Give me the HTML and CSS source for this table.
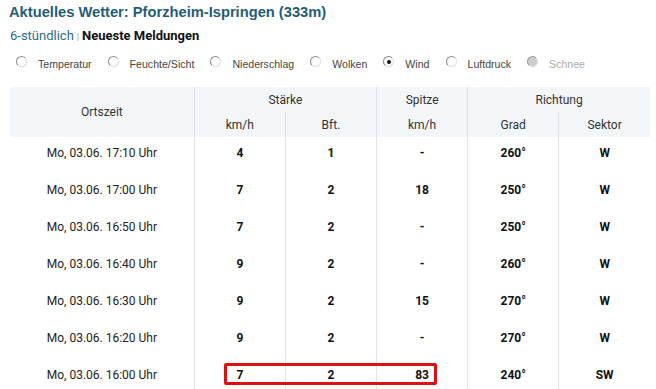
FILE: index.html
```
<!DOCTYPE html>
<html>
<head>
<meta charset="utf-8">
<link rel="stylesheet" href="styles.css">
</head>
<body>
<h1 class="title">Aktuelles Wetter: Pforzheim-Ispringen (333m)</h1>
<div class="tabs"><a class="tab-link">6-stündlich</a><span class="sep">|</span><b class="tab-active">Neueste Meldungen</b></div>
<div class="radios">
  <label class="opt"><span class="radio"></span><span class="lbl">Temperatur</span></label>
  <label class="opt"><span class="radio"></span><span class="lbl">Feuchte/Sicht</span></label>
  <label class="opt"><span class="radio"></span><span class="lbl">Niederschlag</span></label>
  <label class="opt"><span class="radio"></span><span class="lbl">Wolken</span></label>
  <label class="opt"><span class="radio checked"></span><span class="lbl">Wind</span></label>
  <label class="opt"><span class="radio"></span><span class="lbl">Luftdruck</span></label>
  <label class="opt disabled"><span class="radio"></span><span class="lbl">Schnee</span></label>
</div>
<div class="table-wrap">
<table class="wx">
  <colgroup>
    <col class="c-time"><col class="c-n"><col class="c-n"><col class="c-n"><col class="c-n"><col class="c-n">
  </colgroup>
  <thead>
    <tr class="h1">
      <th rowspan="2" class="first">Ortszeit</th>
      <th colspan="2" class="grp">Stärke</th>
      <th class="grp">Spitze</th>
      <th colspan="2" class="grp last">Richtung</th>
    </tr>
    <tr class="h2">
      <th class="grp">km/h</th>
      <th class="sub">Bft.</th>
      <th class="grp">km/h</th>
      <th class="grp">Grad</th>
      <th class="sub last">Sektor</th>
    </tr>
  </thead>
  <tbody>
    <tr><td>Mo, 03.06. 17:10 Uhr</td><td><b>4</b></td><td><b>1</b></td><td><b>-</b></td><td><b>260°</b></td><td><b>W</b></td></tr>
    <tr><td>Mo, 03.06. 17:00 Uhr</td><td><b>7</b></td><td><b>2</b></td><td><b>18</b></td><td><b>250°</b></td><td><b>W</b></td></tr>
    <tr><td>Mo, 03.06. 16:50 Uhr</td><td><b>7</b></td><td><b>2</b></td><td><b>-</b></td><td><b>250°</b></td><td><b>W</b></td></tr>
    <tr><td>Mo, 03.06. 16:40 Uhr</td><td><b>9</b></td><td><b>2</b></td><td><b>-</b></td><td><b>260°</b></td><td><b>W</b></td></tr>
    <tr><td>Mo, 03.06. 16:30 Uhr</td><td><b>9</b></td><td><b>2</b></td><td><b>15</b></td><td><b>270°</b></td><td><b>W</b></td></tr>
    <tr><td>Mo, 03.06. 16:20 Uhr</td><td><b>9</b></td><td><b>2</b></td><td><b>-</b></td><td><b>270°</b></td><td><b>W</b></td></tr>
    <tr><td>Mo, 03.06. 16:00 Uhr</td><td><b>7</b></td><td><b>2</b></td><td><b>83</b></td><td><b>240°</b></td><td><b>SW</b></td></tr>
  </tbody>
</table>
<div class="highlight"></div>
</div>
</body>
</html>
```
FILE: styles.css
```
html, body { margin: 0; padding: 0; background: #fff; }
body { padding: 0 6px 0 10px; font-family: "Liberation Sans", Arial, sans-serif; color: #222; overflow: hidden; }
.title {
  margin: 3px 0 0 -1px;
  font-size: 14.7px;
  font-weight: bold;
  color: #1f5d78;
  line-height: 18px;
}
.tabs {
  margin-top: 7px;
  font-family: Roboto, "Liberation Sans", sans-serif;
  font-size: 13px;
  line-height: 16px;
}
.tab-link { color: #2b6d8a; }
.sep { color: #999; font-size: 9px; margin: 0 3px; }
.tab-active { color: #111; font-weight: bold; }
.radios {
  display: flex;
  align-items: center;
  margin-top: 11px;
  height: 16px;
  font-size: 10.6px;
  color: #444;
}
.opt { display: flex; align-items: center; margin-right: 10px; }
.radio {
  border-radius: 50%;
  border: 1px solid #888;
  border-right-color: #ddd;
  border-bottom-color: #ddd;
  background: #fff;
  margin: -5px 0 0 6px;
  position: relative;
  box-sizing: border-box;
  width: 11px; height: 11px;
}
.radio.checked::after {
  content: ""; position: absolute; left: 2.5px; top: 2.5px; width: 4px; height: 4px; border-radius: 50%; background: #111;
}
.lbl { margin-left: 11px; }
.disabled { color: #aaa; }
.disabled .radio { background: #ccc; border-color: #999 #ddd #ddd #999; }
.table-wrap { position: relative; margin-top: 15px; }
.wx {
  border-collapse: collapse;
  width: 640px;
  table-layout: fixed;
  font-family: Roboto, "Liberation Sans", sans-serif;
  font-size: 12px;
  color: #222;
}
.c-time { width: 184px; }
.c-n { width: 91px; }
.wx th {
  background: #f3f6f9;
  font-weight: normal;
  color: #333;
  height: 25px;
  padding: 0;
  text-align: center;
  vertical-align: middle;
}
.wx th.grp { border-left: 1px solid #dde0e4; }
.wx th.sub { border-left: 1px solid #dde0e4; }
.wx .h1 th.first { border-radius: 4px 0 0 4px; }
.wx td {
  height: 37px;
  padding: 0 0 5px 0;
  text-align: center;
  vertical-align: middle;
  border-left: 1px solid #e3e3e3;
  box-sizing: border-box;
}
.wx td:first-child { border-left: none; }
.wx td b { font-weight: bold; color: #111; }
.highlight {
  position: absolute;
  left: 214px;
  top: 276px;
  width: 213px;
  height: 22px;
  border: 3px solid #e01010;
  border-radius: 2px;
  box-sizing: border-box;
}
```
